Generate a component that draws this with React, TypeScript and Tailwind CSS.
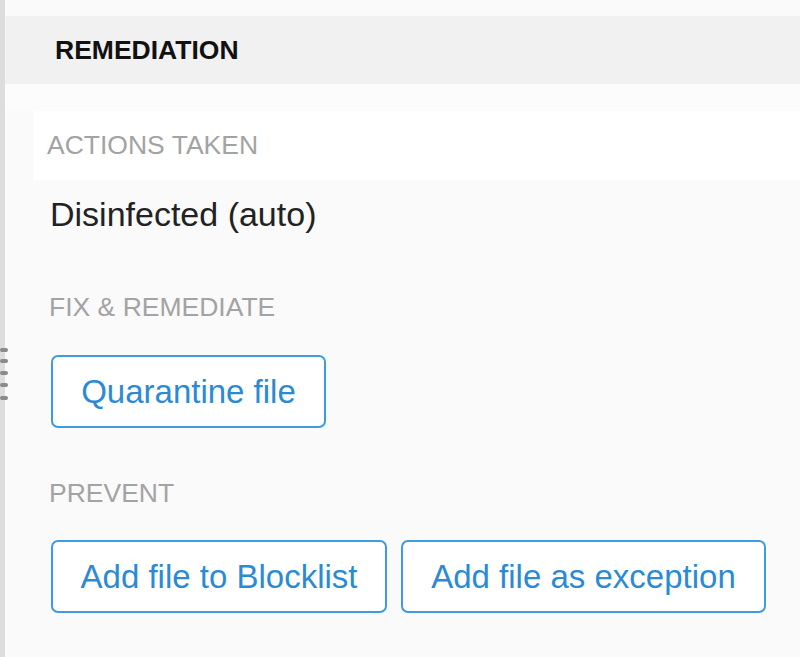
import React from 'react';

const font = { fontFamily: '"Liberation Sans", Arial, sans-serif' };

const gripDots = [348, 359, 371, 383, 396];

const OutlineButton: React.FC<{ label: string; width: string }> = ({ label, width }) => (
  <button
    className={`h-[73px] ${width} rounded-[7px] border-2 border-[#3d9be0] bg-white text-[33px] text-[#2a8bd4] leading-none flex items-center justify-center`}
  >
    {label}
  </button>
);

const SectionLabel: React.FC<{ children: React.ReactNode }> = ({ children }) => (
  <div className="text-[26.5px] leading-none text-[#a3a3a3] uppercase">{children}</div>
);

export default function App() {
  return (
    <div className="w-[800px] h-[657px] bg-[#fafafa] flex overflow-hidden" style={font}>
      {/* splitter strip with grip */}
      <div className="relative w-[5px] h-full bg-[#dddddd] flex-shrink-0">
        {gripDots.map((y) => (
          <div
            key={y}
            className="absolute left-0 w-[8px] h-[4px] rounded-full bg-[#8a8a8a]"
            style={{ top: y }}
          />
        ))}
      </div>

      <div className="flex-1 flex flex-col">
        <div className="h-[16px]" />
        <div className="h-[68px] bg-[#f1f1f1] flex items-center pl-[50px]">
          <span className="text-[26.5px] font-bold text-[#111] leading-none">REMEDIATION</span>
        </div>

        <div className="h-[27px] bg-[#fcfcfc]" />

        <div className="h-[69px] ml-[28px] bg-white flex items-center pl-[14px]">
          <SectionLabel>Actions taken</SectionLabel>
        </div>

        <div className="pl-[45px] pt-[17px] text-[34px] leading-none text-[#222]">Disinfected (auto)</div>

        <div className="pl-[44px] pt-[63px]">
          <SectionLabel>Fix &amp; Remediate</SectionLabel>
        </div>

        <div className="pl-[46px] pt-[34px]">
          <OutlineButton label="Quarantine file" width="w-[275px]" />
        </div>

        <div className="pl-[44px] pt-[52px]">
          <SectionLabel>Prevent</SectionLabel>
        </div>

        <div className="pl-[46px] pt-[34px] flex gap-[14px]">
          <OutlineButton label="Add file to Blocklist" width="w-[336px]" />
          <OutlineButton label="Add file as exception" width="w-[365px]" />
        </div>
      </div>
    </div>
  );
}
